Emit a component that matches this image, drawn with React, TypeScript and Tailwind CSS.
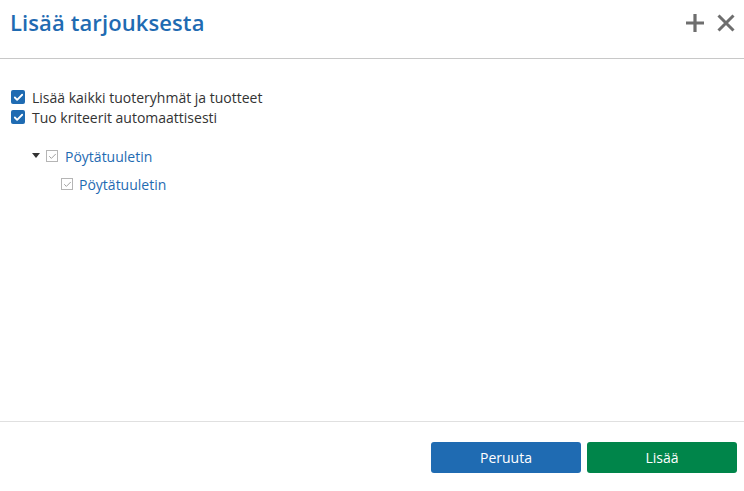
import { Check } from "lucide-react";

function BlueCheck({ label }: { label: string }) {
  return (
    <label className="flex items-center gap-[7px] h-5">
      <span className="flex h-[14px] w-[14px] items-center justify-center rounded-[2px] bg-[#1f6bb2]">
        <Check size={11} strokeWidth={4} className="text-white" />
      </span>
      <span className="text-[14px] text-[#333]">{label}</span>
    </label>
  );
}

function TreeCheck() {
  return (
    <span className="flex h-[12px] w-[12px] items-center justify-center border border-[#b5b5b5] bg-white">
      <Check size={9} strokeWidth={2.5} className="text-[#9a9a9a]" />
    </span>
  );
}

export default function App() {
  return (
    <div
      className="flex h-[491px] w-[744px] flex-col bg-white"
      style={{ fontFamily: '"Open Sans", sans-serif' }}
    >
      <header className="flex h-[59px] shrink-0 items-start justify-between border-b border-[#c8c8c8] pl-[10px] pr-[8px] pt-[6px]">
        <h1 className="text-[22px] leading-[32px] font-semibold tracking-[0.1px] text-[#1f6bb2]">
          Lisää tarjouksesta
        </h1>
        <div className="flex items-center gap-[11px] pt-[7px] text-[#6e6e6e]">
          <svg width="20" height="20" viewBox="0 0 20 20">
            <path d="M10 1v18M1 10h18" stroke="currentColor" strokeWidth="3.2" />
          </svg>
          <svg width="20" height="20" viewBox="0 0 20 20">
            <path d="M2.5 2.5l15 15M17.5 2.5l-15 15" stroke="currentColor" strokeWidth="3" />
          </svg>
        </div>
      </header>

      <main className="flex-1 px-[11px] pt-[28px]">
        <BlueCheck label="Lisää kaikki tuoteryhmät ja tuotteet" />
        <BlueCheck label="Tuo kriteerit automaattisesti" />

        <div className="mt-[19px] pl-[21px]">
          <div className="flex h-[20px] items-center">
            <svg width="8" height="6" viewBox="0 0 8 6" className="mr-[6px]">
              <path d="M0 0h8L4 5z" fill="#333" />
            </svg>
            <TreeCheck />
            <span className="ml-[7px] text-[14px] text-[#1f6bb2]">Pöytätuuletin</span>
          </div>
          <div className="mt-[8px] flex h-[20px] items-center pl-[29px]">
            <TreeCheck />
            <span className="ml-[6px] text-[14px] text-[#1f6bb2]">Pöytätuuletin</span>
          </div>
        </div>
      </main>

      <footer className="flex h-[70px] shrink-0 items-start justify-end gap-[6px] border-t border-[#e0e0e0] pr-[7px] pt-[20px]">
        <button className="h-[31px] w-[150px] rounded-[3px] bg-[#1f6bb2] text-[14px] text-white">
          Peruuta
        </button>
        <button className="h-[31px] w-[150px] rounded-[3px] bg-[#00854a] text-[14px] text-white">
          Lisää
        </button>
      </footer>
    </div>
  );
}
